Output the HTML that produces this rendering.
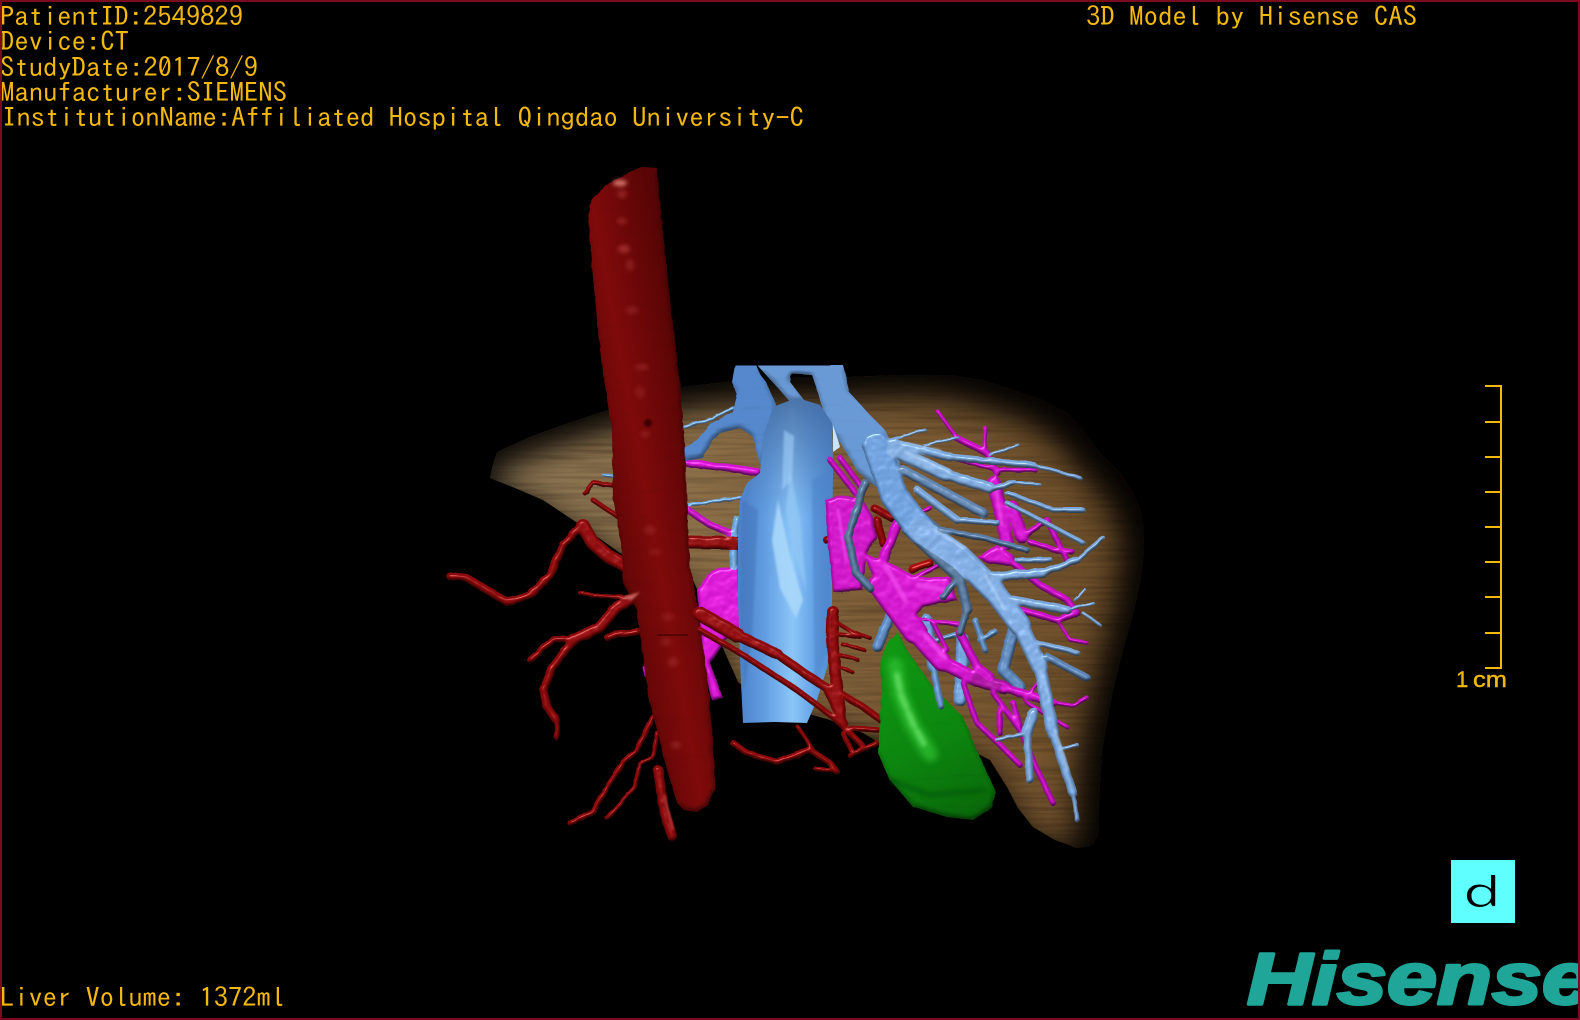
<!DOCTYPE html>
<html>
<head>
<meta charset="utf-8">
<style>
html,body{margin:0;padding:0;background:#000;width:1580px;height:1020px;overflow:hidden}
svg{display:block}
.t{font-family:"IPAGothic","Liberation Mono",monospace;font-size:26.5px;fill:#f3b80e}
</style>
</head>
<body>
<svg width="1580" height="1020" viewBox="0 0 1580 1020" xmlns="http://www.w3.org/2000/svg">
<defs>
<linearGradient id="lb" gradientUnits="userSpaceOnUse" x1="480" y1="0" x2="1140" y2="0">
<stop offset="0" stop-color="#8f7a58"/><stop offset=".35" stop-color="#8a6d47"/><stop offset=".65" stop-color="#7c5c35"/><stop offset="1" stop-color="#6c4d29"/>
</linearGradient>
<linearGradient id="ao" gradientUnits="userSpaceOnUse" x1="590" y1="500" x2="700" y2="480">
<stop offset="0" stop-color="#560404"/><stop offset=".5" stop-color="#7f0a0b"/><stop offset="1" stop-color="#5a0505"/>
</linearGradient>
<linearGradient id="iv" gradientUnits="userSpaceOnUse" x1="738" y1="0" x2="832" y2="0">
<stop offset="0" stop-color="#4a80ca"/><stop offset=".3" stop-color="#639fe2"/><stop offset=".58" stop-color="#8cc6f8"/><stop offset=".8" stop-color="#65a3e6"/><stop offset="1" stop-color="#4f8ad2"/>
</linearGradient>
<linearGradient id="ivtop" gradientUnits="userSpaceOnUse" x1="0" y1="400" x2="0" y2="520">
<stop offset="0" stop-color="#40689f" stop-opacity=".85"/><stop offset="1" stop-color="#4a73b0" stop-opacity="0"/>
</linearGradient>
<linearGradient id="gr" gradientUnits="userSpaceOnUse" x1="885" y1="650" x2="970" y2="820">
<stop offset="0" stop-color="#109812"/><stop offset=".55" stop-color="#0c860f"/><stop offset="1" stop-color="#096809"/>
</linearGradient>
<filter id="liv" x="-5%" y="-5%" width="110%" height="110%" color-interpolation-filters="sRGB">
<feTurbulence type="fractalNoise" baseFrequency=".012 .3" numOctaves="2" seed="4" result="n"/>
<feColorMatrix in="n" type="matrix" values="0 0 0 0 .1  0 0 0 0 .06  0 0 0 0 .02  .55 0 0 0 -.22" result="st"/>
<feComposite in="st" in2="SourceAlpha" operator="in" result="st2"/>
<feGaussianBlur in="SourceAlpha" stdDeviation="20" result="b"/>
<feOffset in="b" dx="-13" dy="13" result="bo"/>
<feFlood flood-color="#050302"/>
<feComposite in2="bo" operator="out" result="sh"/>
<feComposite in="sh" in2="SourceAlpha" operator="in" result="sh2"/>
<feMerge><feMergeNode in="SourceGraphic"/><feMergeNode in="st2"/><feMergeNode in="sh2"/><feMergeNode in="sh2"/></feMerge>
</filter>
<filter id="tube" filterUnits="userSpaceOnUse" x="400" y="140" width="760" height="740" color-interpolation-filters="sRGB">
<feTurbulence type="fractalNoise" baseFrequency=".09" numOctaves="2" seed="7" result="n"/>
<feDisplacementMap in="SourceGraphic" in2="n" scale="2.5" result="src"/>
<feColorMatrix in="src" type="matrix" values="0 0 0 0 0 0 0 0 0 0 0 0 0 0 0 0 0 0 1 0" result="al"/>
<feGaussianBlur in="al" stdDeviation="1.5" result="b"/>
<feComposite in="b" in2="n" operator="arithmetic" k1=".14" k2=".86" result="h"/>
<feDiffuseLighting in="h" surfaceScale="3" diffuseConstant="1.2" lighting-color="#fff" result="d"><feDistantLight azimuth="250" elevation="58"/></feDiffuseLighting>
<feComposite in="src" in2="d" operator="arithmetic" k1=".72" k2=".28" result="lit"/>
<feSpecularLighting in="h" surfaceScale="3" specularConstant=".42" specularExponent="60" lighting-color="#fff" result="s"><feDistantLight azimuth="250" elevation="58"/></feSpecularLighting>
<feComposite in="s" in2="al" operator="in" result="s2"/>
<feComposite in="lit" in2="s2" operator="arithmetic" k2="1" k3="1"/>
</filter>
<filter id="body" filterUnits="userSpaceOnUse" x="400" y="140" width="760" height="740" color-interpolation-filters="sRGB">
<feTurbulence type="fractalNoise" baseFrequency=".015 .1" numOctaves="2" seed="11" result="n"/>
<feDisplacementMap in="SourceGraphic" in2="n" scale="3" result="src"/>
<feColorMatrix in="src" type="matrix" values="0 0 0 0 0 0 0 0 0 0 0 0 0 0 0 0 0 0 1 0" result="al"/>
<feGaussianBlur in="al" stdDeviation="3" result="b"/>
<feComposite in="b" in2="n" operator="arithmetic" k1=".16" k2=".84" result="h"/>
<feDiffuseLighting in="h" surfaceScale="3" diffuseConstant="1.2" lighting-color="#fff" result="d"><feDistantLight azimuth="250" elevation="58"/></feDiffuseLighting>
<feComposite in="src" in2="d" operator="arithmetic" k1=".72" k2=".28"/>
</filter>
<filter id="soft" x="-30%" y="-30%" width="160%" height="160%"><feGaussianBlur stdDeviation="2.2"/></filter>
<filter id="soft3" x="-50%" y="-50%" width="200%" height="200%"><feGaussianBlur stdDeviation="3.5"/></filter>
<filter id="soft2" x="-30%" y="-30%" width="160%" height="160%"><feGaussianBlur stdDeviation="1"/></filter>
<clipPath id="frame"><rect x="0" y="0" width="1578" height="1018"/></clipPath>
</defs>

<rect width="1580" height="1020" fill="#000"/>

<!-- liver -->
<path filter="url(#liv)" fill="url(#lb)" d="M490 478 L492 468 L497 452 L530 437 L563 425 L608 410 L650 398 L683 387 L735 381 L790 378 L850 377 L900 375 L950 375 L985 381 L1013 390 L1042 400 L1067 413 L1085 432 L1100 453 L1120 473 L1133 493 L1141 512 L1144 532 L1143 560 L1140 583 L1132 618 L1123 650 L1112 695 L1102 750 L1099 800 L1098 835 L1092 845 L1077 848 L1055 840 L1033 827 L1018 808 L1007 787 L990 760 L960 745 L880 743 L863 733 L830 720 L760 700 L738 682 L715 630 L693 580 L660 570 L620 553 L585 528 L543 500 L515 488 Z"/>

<!-- blue thin, behind aorta -->
<g fill="none" stroke-linecap="round" stroke-linejoin="round" filter="url(#tube)">
<path stroke="#6e9fdc" stroke-width="3" d="M603 475 L625 478"/>
<path stroke="#78aee8" stroke-width="3.5" d="M735 407 L712 419 L683 427"/>
<path stroke="#78aee8" stroke-width="3.5" d="M690 505 L722 500 L742 498"/>
<!-- magenta behind IVC -->
<path fill="#d414ce" stroke="none" d="M697 590 L707 576 L717 568 L740 567 L745 623 L723 643 L710 663 L723 698 L712 700 L704 668 L700 633 Z"/>
<path stroke="#d416d0" stroke-width="8" d="M687 463 L722 467 L757 472"/>
<path stroke="#cc18c8" stroke-width="7" d="M688 510 L710 525 L735 535"/>
<path stroke="#c814c4" stroke-width="5" d="M645 668 L647 676"/>
<path stroke="#6fa8e0" stroke-width="8" d="M737 520 L733 545 L734 566"/>
<path stroke="#8a0b0b" stroke-width="13" d="M688 542 L744 543"/>
</g>

<!-- hepatic veins -->
<g filter="url(#body)">
<path fill="#5588cc" d="M735 365 L756 365 L760 374 L766 382 L776 405 L776 425 L768 436 L762 470 L752 436 L740 428 L720 433 L710 444 L703 458 L685 461 L683 448 L697 440 L710 424 L733 412 L737 395 L732 382 Z"/>
<path fill="#6a9ad6" d="M757 365 L843 365 L850 393 L870 415 L885 430 L899 458 L905 500 L880 490 L858 472 L843 447 L826 420 L819 395 L812 375 L792 374 L790 382 L804 400 L790 402 L778 388 Z"/>
</g>
<!-- IVC -->
<path fill="url(#iv)" d="M740 500 L747 483 L760 473 L764 433 L773 407 L797 398 L820 405 L832 423 L833 470 L832 560 L832 640 L827 668 L817 700 L807 723 L775 722 L743 723 L741 683 L738 600 L738 530 Z"/>
<path fill="url(#ivtop)" d="M747 483 L760 473 L764 433 L773 407 L797 398 L820 405 L832 423 L833 520 L740 520 Z"/>
<g filter="url(#soft2)">
<path fill="#add9fb" opacity=".85" d="M778 500 L790 555 L803 600 L796 618 L780 588 L772 540 Z"/>
<path fill="#8fc6f5" opacity=".8" d="M790 470 L800 520 L806 590 L796 560 L786 510 Z"/>
<path fill="#3f6fb4" opacity=".45" d="M742 500 L758 510 L752 640 L744 690 L740 600 Z"/>
<path fill="#9ed0f8" opacity=".6" d="M784 430 L794 436 L792 480 L782 490 Z"/>
<path fill="#4c82c8" opacity=".5" d="M812 480 L830 470 L830 640 L815 690 Z"/>
</g>

<!-- aorta branches -->
<g fill="none" stroke="#8c0a0b" stroke-linecap="round" stroke-linejoin="round" filter="url(#tube)">
<path stroke-width="8" d="M450 576 L467 578 L487 590 L507 602 L530 595 L550 575 L563 545 L583 524"/>
<path stroke-width="14" d="M583 526 L593 543 L608 556 L626 566"/>
<path stroke-width="11" d="M648 590 L617 607 L600 627 L573 640"/>
<path stroke-width="8" d="M573 640 L553 667 L543 690 L547 707 L556 720"/>
<path stroke-width="5" d="M556 716 L558 728 L556 737"/>
<path stroke-width="6" d="M573 640 L553 639 L530 660"/>
<path stroke-width="7" d="M638 632 L620 634 L607 637"/>
<path stroke-width="4" d="M580 593 L600 596 L622 597"/>
<path stroke-width="5" d="M653 717 L637 750 L623 763 L607 787 L593 812 L570 823"/>
<path stroke-width="4.5" d="M657 733 L653 757 L640 763 L635 787 L607 818"/>
<path stroke-width="10" d="M658 770 L664 810 L672 836"/>
<path stroke-width="5" d="M593 483 L613 485 M585 493 L593 483 M593 500 L620 518"/>
</g>

<!-- aorta -->
<g filter="url(#body)">
<path fill="url(#ao)" d="M593 197 L613 180 L643 167 L657 168 L662 223 L670 300 L680 383 L685 450 L687 500 L690 567 L698 607 L703 645 L708 687 L713 740 L715 790 L708 805 L697 812 L684 810 L677 803 L667 770 L657 730 L649 700 L642 650 L637 610 L623 583 L622 550 L617 520 L613 500 L612 433 L600 350 L592 267 L588 217 Z"/>
</g>
<g fill="#a63434" filter="url(#soft)">
<ellipse cx="620" cy="183" rx="7" ry="3" fill="#d87a70"/>
<ellipse cx="622" cy="194" rx="5" ry="4" opacity=".6"/>
<ellipse cx="622" cy="221" rx="5" ry="3" opacity=".6"/>
<ellipse cx="624" cy="249" rx="6" ry="4" opacity=".8"/>
<ellipse cx="630" cy="265" rx="4" ry="6" opacity=".5"/>
<ellipse cx="632" cy="310" rx="6" ry="4" opacity=".4"/>
<ellipse cx="642" cy="367" rx="7" ry="3" opacity=".5"/>
<ellipse cx="640" cy="392" rx="5" ry="6" opacity=".35"/>
<ellipse cx="645" cy="434" rx="5" ry="3" opacity=".45"/>
<ellipse cx="650" cy="530" rx="6" ry="4" opacity=".45"/>
<ellipse cx="655" cy="552" rx="7" ry="3" opacity=".35"/>
<ellipse cx="668" cy="617" rx="6" ry="4" opacity=".35"/>
<ellipse cx="666" cy="642" rx="5" ry="4" opacity=".4"/>
<ellipse cx="673" cy="662" rx="5" ry="5" opacity=".5"/>
<ellipse cx="676" cy="745" rx="5" ry="3" opacity=".6"/>
</g>
<path d="M620 598 L640 592 L632 600 Z" fill="#c4605a" filter="url(#soft2)"/>
<path d="M664 795 L673 830" stroke="#b84040" stroke-width="2" filter="url(#soft2)"/>
<ellipse cx="648" cy="423" rx="4" ry="4" fill="#3e0505" filter="url(#soft2)"/>
<path d="M657 635 L688 635" stroke="#3a0404" stroke-width="1.2"/>

<!-- red over IVC -->
<g fill="none" stroke="#8c0a0b" stroke-linecap="round" stroke-linejoin="round" filter="url(#tube)">
<path stroke-width="15" d="M700 614 L737 635"/>
<path stroke-width="11" d="M737 635 L777 654"/>
<path stroke-width="9" d="M777 654 L807 675 L827 688 L843 723"/>
<path stroke-width="6" d="M700 630 L740 653 L797 690 L833 717 L850 733 L862 745"/>
<path stroke-width="12" d="M833 612 L832 640 L836 680 L840 716"/>
<path stroke-width="4" d="M836 622 L852 632 L870 638 M838 634 L860 637 M842 644 L864 650 M840 655 L858 660 M842 668 L852 672"/>
<path stroke-width="7" d="M843 695 L863 707 L881 720"/>
<path stroke-width="5.5" d="M850 728 L878 730"/>
<path stroke-width="5" d="M850 755 L877 743 M843 733 L852 752"/>
<path stroke-width="6" d="M733 743 L747 753 L777 762 L810 750 L830 763 L837 772"/>
<path stroke-width="4" d="M798 727 L813 750 M815 768 L838 772"/>
<path stroke-width="8" d="M874 508 L892 518 M877 520 L883 543 M827 540 L838 537"/>
<path stroke="#a80f0f" stroke-width="8" d="M912 569 L930 563"/>
</g>

<!-- green -->
<g filter="url(#body)">
<path fill="url(#gr)" d="M897 632 L907 650 L933 687 L963 717 L980 757 L995 790 L993 807 L973 820 L947 817 L913 807 L890 780 L878 753 L882 687 L880 663 L887 643 Z"/>
</g>
<path d="M895 665 L900 695 L912 725 L930 754" fill="none" stroke="#2fc032" stroke-width="15" stroke-linecap="round" filter="url(#soft3)" opacity=".75"/>
<path d="M897 675 L901 695 L913 724 L924 744" fill="none" stroke="#72ea72" stroke-width="6" stroke-linecap="round" stroke-dasharray="14 6" filter="url(#soft)" opacity=".7"/>
<path d="M890 780 L930 795 L985 790" fill="none" stroke="#054d07" stroke-width="5" filter="url(#soft)" opacity=".5"/>

<!-- blue lower strands -->
<g fill="none" stroke-linecap="round" stroke-linejoin="round" filter="url(#tube)">
<path stroke="#5d8ac0" stroke-width="10" d="M890 617 L877 647"/>
<path stroke="#6e9ed6" stroke-width="11" d="M927 620 L933 667"/>
<path stroke="#6e9ed6" stroke-width="7" d="M933 667 L941 706"/>
<path stroke="#6e9ed6" stroke-width="13" d="M963 640 L960 700"/>
<path stroke="#5c85b8" stroke-width="12" d="M1013 633 L1003 670 L1020 687"/>
<path stroke="#6a97cc" stroke-width="5" d="M922 645 L960 633"/>
<path stroke="#6a97cc" stroke-width="6" d="M975 620 L985 650 M980 640 L995 632"/>
</g>

<!-- magenta -->
<g fill="none" stroke="#cc12c6" stroke-linecap="round" stroke-linejoin="round" filter="url(#tube)">
<path fill="#c812c2" stroke="none" d="M825 500 L843 495 L863 500 L873 517 L877 537 L867 553 L862 590 L833 592 L830 563 L827 533 Z"/>
<path fill="#cf14c9" stroke="none" d="M863 553 L890 563 L917 577 L950 577 L957 600 L923 607 L913 617 L963 622 L960 628 L920 620 L910 627 L893 617 L877 587 Z"/>
<path fill="#cf14c9" stroke="none" d="M977 557 L997 545 L1013 555 L1018 567 L987 563 Z"/>
<path stroke-width="6" d="M830 460 L857 495 M840 458 L862 488"/>
<path stroke-width="24" d="M880 585 L900 612 L915 632"/>
<path stroke-width="19" d="M915 632 L942 662"/>
<path stroke-width="14" d="M942 662 L977 680"/>
<path stroke="#a9149f" stroke-width="13" d="M977 680 L1005 688"/>
<path stroke-width="9" d="M1005 688 L1053 703"/>
<path stroke-width="4" d="M1053 703 L1072 706 L1087 698"/>
<path stroke-width="10" d="M883 560 L897 525"/>
<path stroke-width="4.5" d="M897 525 L930 508"/>
<path stroke-width="4" d="M915 577 L950 560"/>
<path stroke-width="5" d="M933 623 L947 650"/>
<path stroke-width="9" d="M960 633 L977 667 L990 677"/>
<path stroke-width="4" d="M938 412 L957 438"/>
<path stroke-width="7" d="M957 438 L987 453 L997 473"/>
<path stroke-width="4.5" d="M985 428 L985 450 M1035 470 L997 470 L953 458"/>
<path stroke-width="14" d="M994 483 L1000 510 L1007 543"/>
<path stroke-width="13" d="M1012 507 L1022 537"/>
<path stroke-width="6" d="M1025 535 L1047 520 L1067 560 M1030 542 L1055 550 L1072 552"/>
<path stroke-width="7" d="M1013 563 L1040 585 L1067 600 L1077 613"/>
<path stroke-width="7" d="M1020 610 L1057 620 L1077 613"/>
<path stroke-width="3.5" d="M1057 620 L1070 640 L1087 643"/>
<path stroke-width="6" d="M963 683 L977 723 L1000 745 L1020 765"/>
<path stroke-width="6" d="M993 693 L1020 730 L1035 765 L1053 803"/>
<path stroke-width="6" d="M1000 710 L1000 733 M1013 703 L1020 727"/>
<path stroke-width="4" d="M1027 703 L1067 727 M1040 680 L1025 700"/>
</g>
<g fill="none" stroke="#f048ee" stroke-linecap="round" filter="url(#soft2)" opacity=".75">
<path stroke-width="5" d="M885 565 L905 600 M925 635 L945 658 M918 585 L945 590"/>
<path stroke-width="3" d="M996 490 L1002 525 M838 510 L846 560"/>
</g>

<!-- blue upper branches -->
<g fill="none" stroke-linecap="round" stroke-linejoin="round" filter="url(#tube)">
<path stroke="#58789c" stroke-width="8" d="M865 483 L848 537 L856 573 L870 588"/>
<path stroke="#58789c" stroke-width="10" d="M900 497 L937 530"/>
<path stroke="#58789c" stroke-width="10" d="M907 530 L953 573 L960 577 L967 610"/>
<path stroke="#58789c" stroke-width="7" d="M960 575 L943 597 M967 610 L960 633"/>
<path stroke="#6a9ad6" stroke-width="28" d="M876 445 L895 497 L920 530"/>
<path stroke="#7aa6dc" stroke-width="24" d="M920 530 L960 557 L993 590"/>
<path stroke="#7aa6dc" stroke-width="22" d="M993 590 L1020 625"/>
<path stroke="#7aa6dc" stroke-width="17" d="M1020 625 L1040 667"/>
<path stroke="#7aa6dc" stroke-width="13" d="M1040 667 L1053 733"/>
<path stroke="#7aa6dc" stroke-width="9" d="M1053 733 L1073 793"/>
<path stroke="#7aa6dc" stroke-width="4.5" d="M1073 793 L1077 820"/>
<g stroke="#7ca6d8">
<path stroke-width="9" d="M892 443 L950 457"/><path stroke-width="7" d="M950 457 L1033 465"/><path stroke-width="4" d="M1033 465 L1080 478"/>
<path stroke-width="14" d="M893 450 L947 475"/><path stroke-width="11" d="M947 475 L990 488"/><path stroke-width="6" d="M990 490 L1013 482"/><path stroke-width="3.5" d="M1013 482 L1040 485"/>
<path stroke="#6286b0" stroke-width="10" d="M903 470 L940 490 L983 513"/>
<path stroke-width="5" d="M1007 493 L1053 510 L1083 510"/>
<path stroke-width="5" d="M1007 503 L1053 527 L1083 543"/>
<path stroke-width="8" d="M917 490 L957 520"/><path stroke-width="6" d="M957 520 L997 523"/>
<path stroke-width="10" d="M990 577 L1043 573"/><path stroke-width="7" d="M1043 573 L1077 560"/><path stroke-width="4.5" d="M1077 560 L1103 538"/>
<path stroke="#5c7ea6" stroke-width="6" d="M940 530 L980 537 L1027 550"/>
<path stroke-width="5.5" d="M1017 560 L1050 560"/>
<path stroke-width="9" d="M1013 600 L1067 610"/><path stroke-width="3" d="M1067 610 L1093 603 M1083 613 L1100 625 M1075 600 L1085 590"/>
<path stroke-width="6" d="M1037 643 L1077 653"/>
<path stroke="#5f86b4" stroke-width="8" d="M1047 657 L1087 678"/>
<path stroke-width="3" d="M890 440 L925 430 M925 445 L958 438 M990 455 L1018 445"/>
<path stroke-width="11" d="M1033 713 L1027 733"/>
<path stroke-width="8" d="M1027 733 L1030 780"/>
<path stroke-width="4" d="M1077 745 L1060 750 M997 740 L1027 733"/>
</g>
</g>
<g fill="none" stroke-linecap="round" stroke="#c4e2ff" filter="url(#soft2)" opacity=".55">
<path stroke-width="2.5" d="M905 452 L950 472 M935 530 L965 548 M985 575 L1005 610 M1055 730 L1068 770"/>
<path stroke-width="1.5" d="M900 442 L940 450 M1040 670 L1050 700"/>
</g>
<path fill="#c8e4ff" d="M833 425 L838 440 L840 447 L833 452 Z"/>

<!-- text -->
<text class="t" x="0" y="26" textLength="243" lengthAdjust="spacingAndGlyphs">PatientID:2549829</text>
<text class="t" x="0" y="51" textLength="129" lengthAdjust="spacingAndGlyphs">Device:CT</text>
<text class="t" x="0" y="77" textLength="258" lengthAdjust="spacingAndGlyphs">StudyDate:2017/8/9</text>
<text class="t" x="0" y="102" textLength="287" lengthAdjust="spacingAndGlyphs">Manufacturer:SIEMENS</text>
<text class="t" x="2" y="127" textLength="802" lengthAdjust="spacingAndGlyphs">InstitutionName:Affiliated Hospital Qingdao University-C</text>
<text class="t" x="1086" y="26" textLength="331" lengthAdjust="spacingAndGlyphs">3D Model by Hisense CAS</text>
<text class="t" x="0" y="1007" textLength="285" lengthAdjust="spacingAndGlyphs">Liver Volume: 1372ml</text>

<!-- ruler -->
<g stroke="#f3b80e" stroke-width="2" fill="none">
<path d="M1501 385 V669"/>
<path d="M1485 386 H1502 M1485 422 H1501 M1485 457 H1501 M1485 492 H1501 M1485 527 H1501 M1485 562 H1501 M1485 597 H1501 M1485 633 H1501 M1485 668 H1502"/>
</g>
<g font-family="'Liberation Sans',sans-serif" font-size="22" fill="#f3b80e" stroke="#f3b80e" stroke-width=".4">
<text x="1456" y="687">1</text>
<text x="1473" y="687" textLength="34" lengthAdjust="spacingAndGlyphs">cm</text>
</g>

<!-- cyan box -->
<rect x="1451" y="860" width="64" height="63" fill="#5ffeff"/>
<text x="1462" y="909" font-family="'IPAGothic','Liberation Mono',monospace" font-size="46" fill="#000" stroke="#5ffeff" stroke-width="1" textLength="40" lengthAdjust="spacingAndGlyphs">d</text>

<!-- logo -->
<g clip-path="url(#frame)">
<text x="1247" y="1004" font-family="'Liberation Sans',sans-serif" font-weight="700" font-style="italic" font-size="73" fill="#1fa698" stroke="#1fa698" stroke-width="3" stroke-linejoin="round" textLength="345" lengthAdjust="spacingAndGlyphs">Hisense</text>
</g>

<!-- frame -->
<path d="M1 1 H1579 V1019 H1 Z" fill="none" stroke="#7a0a1e" stroke-width="2"/>
</svg>
</body>
</html>
